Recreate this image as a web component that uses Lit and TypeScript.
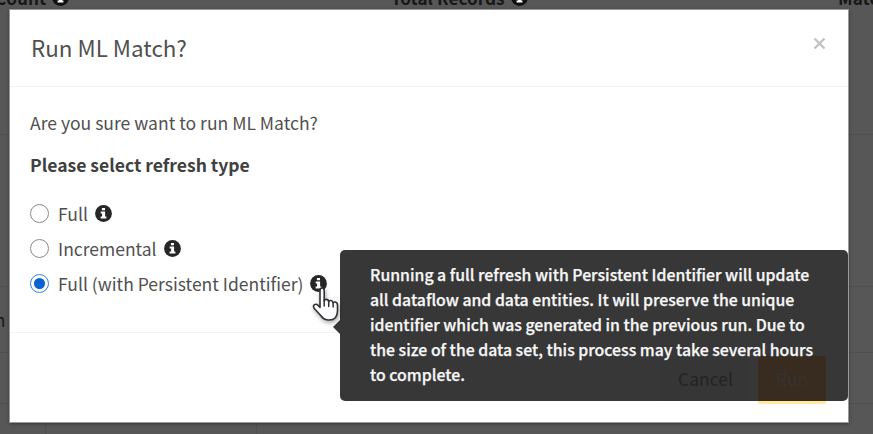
import { LitElement, html, css } from "lit";
import { customElement, property, state } from "lit/decorators.js";

@customElement("info-icon")
class InfoIcon extends LitElement {
  static styles = css`
    :host { display: block; width: 17px; height: 17px; color: #262626; }
    svg { display: block; width: 100%; height: 100%; }
  `;
  render() {
    return html`<svg viewBox="0 0 17 17">
      <circle cx="8.5" cy="8.5" r="8.4" fill="currentColor" />
      <path fill="#fff" d="M6.9 2.900h3.100v2.400H6.900zM5.700 6.600h4.400v5h1.300v2H5.600v-2h1.500V8.500H5.700z" />
    </svg>`;
  }
}

@customElement("refresh-option")
class RefreshOption extends LitElement {
  @property() label = "";
  @property({ type: Boolean, reflect: true }) checked = false;
  static styles = css`
    :host { display: flex; align-items: center; height: 35px; }
    .radio { box-sizing: border-box; width: 19px; height: 19px; border: 1.5px solid #8a8a8a; border-radius: 50%; display: grid; place-items: center; }
    .radio.on { border-color: #2f83e8; }
    .dot { width: 11px; height: 11px; border-radius: 50%; background: #0863cf; }
    .label { margin: 0 7px 0 9px; font-size: 17.5px; line-height: 35px; white-space: nowrap; }
    info-icon { flex: none; }
  `;
  render() {
    return html`<div class="radio ${this.checked ? "on" : ""}">${this.checked ? html`<div class="dot"></div>` : ""}</div>
      <div class="label">${this.label}</div><info-icon></info-icon>`;
  }
}

@customElement("app-root")
class AppRoot extends LitElement {
  @state() selected = 2;
  private options = ["Full", "Incremental", "Full (with Persistent Identifier)"];
  private tip = [
    "Running a full refresh with Persistent Identifier will update",
    "all dataflow and data entities. It will preserve the unique",
    "identifier which was generated in the previous run. Due to",
    "the size of the data set, this process may take several hours",
    "to complete.",
  ];

  static styles = css`
    :host { display: block; position: relative; width: 873px; height: 434px; overflow: hidden; background: #575757; color: #505050; font-family: "Noto Sans CJK SC", "Open Sans", sans-serif; }
    .page { display: grid; grid-template-rows: 135px 152px 66px 51px 30px; height: 434px; color: #171717; }
    .row { border-bottom: 1px solid #4f4f4f; }
    .heads { display: grid; grid-template-columns: 391px 447px 1fr; }
    .head { display: flex; gap: 6px; height: 8px; margin-top: -12px; font-weight: 700; font-size: 17.2px; line-height: 20px; white-space: nowrap; }
    .head.first { margin-left: -5px; }
    .head info-icon { color: #111; margin-top: 1px; }
    .cut { padding-top: 21px; margin-left: -5px; font-size: 17px; line-height: 24px; }
    .cols { display: grid; grid-template-columns: 46px 211px 1fr; }
    .col { border-right: 1px solid #4f4f4f; }
    .modal { position: absolute; left: 9px; top: 9px; width: 840px; height: 414px; box-sizing: border-box; border: 1px solid #999; background: #fff; box-shadow: 0 1px 3px rgba(0, 0, 0, 0.35); display: flex; flex-direction: column; }
    .header { height: 77px; border-bottom: 1px solid #f3f3f3; display: flex; justify-content: space-between; box-sizing: border-box; padding: 0 22px 0 21px; }
    .title { font-size: 22.4px; line-height: 75px; }
    .close { width: 13px; height: 13px; margin-top: 27px; }
    .body { height: 246px; box-sizing: border-box; border-bottom: 1px solid #f3f3f3; padding: 22px 20px 0; }
    .line { font-size: 17.55px; line-height: 28px; white-space: nowrap; }
    .strong { font-weight: 700; margin-top: 14px; color: #404040; }
    .options { margin-top: 17px; }
    .footer { flex: 1; display: flex; justify-content: flex-end; gap: 9px; padding: 23px 22px 0 0; }
    .button { box-sizing: border-box; height: 45px; font-size: 17.5px; line-height: 45px; text-align: center; border-radius: 2px; }
    .cancel { width: 89px; background: #eef1f8; color: #333; padding-left: 2px; }
    .run { width: 68px; background: #ff8a10; color: #ffc888; box-shadow: 0 3px 0 #ffeaa0; }
    .tooltip { position: absolute; left: 340px; top: 250px; width: 508px; height: 151px; box-sizing: border-box; padding: 12px 0 0 30px; border-radius: 5px; background: rgba(33, 33, 33, 0.9); color: #f7f7f7; font-weight: 500; font-size: 15.84px; line-height: 25px; white-space: nowrap; -webkit-text-stroke: 0.25px #f7f7f7; }
    .arrow { position: absolute; left: -7px; top: 70px; width: 7px; height: 14px; background: #373737; clip-path: polygon(100% 0, 0 50%, 100% 100%); }
    .cursor { position: absolute; left: 311px; top: 286px; width: 29px; height: 36px; overflow: visible; filter: drop-shadow(1px 2px 2px rgba(0, 0, 0, 0.35)); }
  `;

  render() {
    return html`
      <div class="page">
        <div class="row heads">
          <div class="head first"><span>Count</span><info-icon></info-icon></div>
          <div class="head"><span>Total Records</span><info-icon></info-icon></div>
          <div class="head"><span>Match</span></div>
        </div>
        <div class="row"></div>
        <div class="row cut">n</div>
        <div class="row"></div>
        <div class="cols"><div class="col"></div><div class="col"></div><div></div></div>
      </div>
      <div class="modal">
        <div class="header">
          <div class="title">Run ML Match?</div>
          <svg class="close" viewBox="0 0 13 13"><path d="M1.500 1.500l10 10M11.500 1.500l-10 10" stroke="#c2c2c2" stroke-width="2.300" /></svg>
        </div>
        <div class="body">
          <div class="line">Are you sure want to run ML Match?</div>
          <div class="line strong">Please select refresh type</div>
          <div class="options">
            ${this.options.map((o, i) => html`<refresh-option .label=${o} .checked=${i === this.selected}></refresh-option>`)}
          </div>
        </div>
        <div class="footer">
          <div class="button cancel">Cancel</div>
          <div class="button run">Run</div>
        </div>
      </div>
      <div class="tooltip"><div class="arrow"></div>${this.tip.map((t) => html`<div>${t}</div>`)}</div>
      <svg class="cursor" viewBox="0 0 29 36">
        <path d="M9 4.500Q9 2 11 2t2.200 2.500V15q.3-1.800 2.200-1.600 2 .1 2.300 2.300.4-1.400 2.100-1.200 2 .2 2.300 2.400.4-1.200 2-.9 2.400.4 2.400 3.300v5.500Q26.500 34 18 34q-5.200 0-7.800-4L3.300 22.500Q1.600 20 3.500 18.600q1.700-1 3.500.7L9 21.500z" fill="#fff" stroke="#303038" stroke-width="1.600" stroke-linejoin="round" />
        <path d="M13.200 14v6M17.700 15.500v5M22.100 17v4" stroke="#303038" stroke-width="1.500" stroke-linecap="round" />
      </svg>
    `;
  }
}
